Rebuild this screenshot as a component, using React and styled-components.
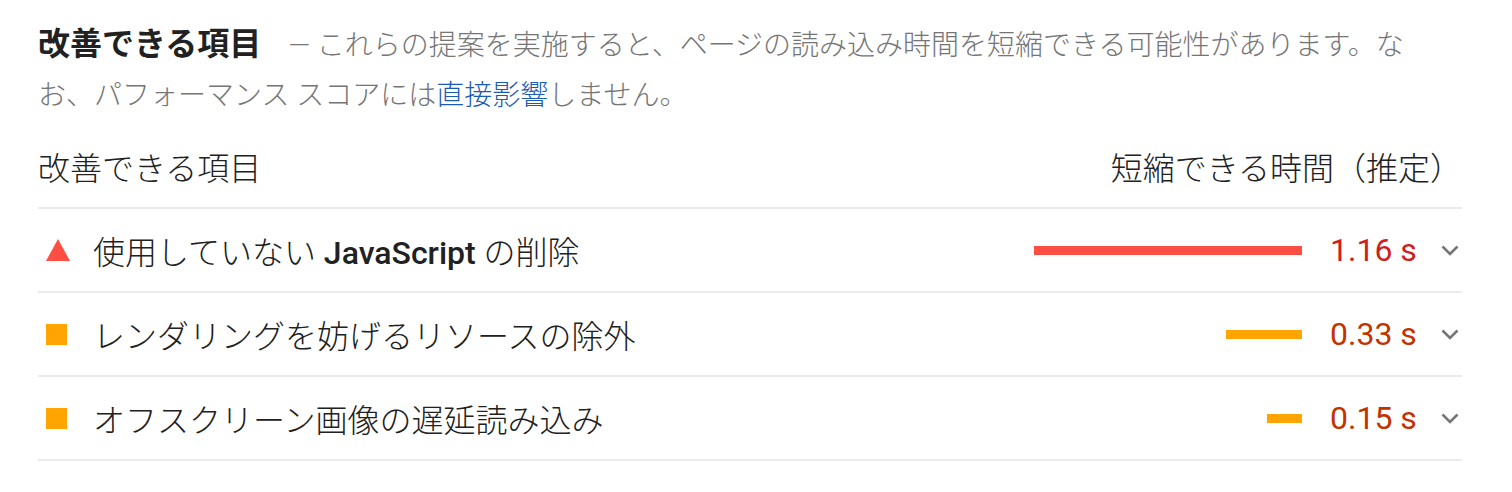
import React from "react";
import styled, { createGlobalStyle } from "styled-components";

const GlobalStyle = createGlobalStyle`
  html, body {
    margin: 0;
    padding: 0;
    background: #ffffff;
  }
  body {
    font-family: Roboto, "Noto Sans CJK JP", sans-serif;
    color: #212121;
  }
`;

const Section = styled.section`
  padding: 19px 50px 0 38px;
`;

const Intro = styled.p`
  margin: 0;
  padding-right: 24px;
  line-height: 50px;
  font-size: 28px;
  color: #757575;
  font-weight: 300;
`;

const GroupTitle = styled.span`
  font-size: 32px;
  font-weight: 700;
  color: #212121;
  margin-right: 27px;
`;

const Description = styled.span`
  color: #757575;
`;

const Link = styled.a`
  color: #1a5bb5;
  text-decoration: none;
`;

const Table = styled.div`
  display: flex;
  flex-direction: column;
`;

const HeaderRow = styled.div`
  display: flex;
  align-items: center;
  justify-content: space-between;
  padding: 28px 0 18px;
  line-height: 40px;
  font-size: 32px;
  font-weight: 300;
  color: #212121;
  border-bottom: 2px solid #ebebeb;
`;

const Row = styled.div`
  display: flex;
  align-items: center;
  height: 82px;
  border-bottom: 2px solid #ebebeb;
`;

const IconSlot = styled.div`
  width: 24px;
  margin-left: 8px;
  margin-right: 23px;
  display: flex;
  align-items: center;
  justify-content: flex-start;
`;

const Triangle = styled.div`
  width: 0;
  height: 0;
  border-left: 12px solid transparent;
  border-right: 12px solid transparent;
  border-bottom: 22px solid #ff4e42;
`;

const Square = styled.div`
  width: 21px;
  height: 21px;
  background: #ffa400;
`;

const Title = styled.div`
  flex: 1;
  font-size: 32px;
  font-weight: 300;
  color: #212121;
  white-space: nowrap;
`;

const Code = styled.span`
  font-weight: 500;
`;

const Spark = styled.div`
  width: 268px;
  display: flex;
  justify-content: flex-end;
`;

const Bar = styled.div`
  height: 9px;
  background: ${(p) => (p.$level === "fail" ? "#ff4e42" : "#ffa400")};
`;

const Value = styled.div`
  width: 108px;
  margin-left: 28px;
  font-family: Roboto, sans-serif;
  font-size: 32px;
  color: ${(p) => (p.$level === "fail" ? "#d01d1d" : "#c33300")};
`;

const Chevron = styled.div`
  width: 24px;
  display: flex;
  justify-content: center;
  align-items: center;
`;

const MAX = 1.16;
const BAR_MAX = 268;

const items = [
  {
    level: "fail",
    title: (
      <>
        使用していない <Code>JavaScript</Code> の削除
      </>
    ),
    value: 1.16,
  },
  { level: "average", title: "レンダリングを妨げるリソースの除外", value: 0.33 },
  { level: "average", title: "オフスクリーン画像の遅延読み込み", value: 0.15 },
];

export default function App() {
  return (
    <>
      <GlobalStyle />
      <Section>
        <Intro>
          <GroupTitle>改善できる項目</GroupTitle>
          <Description>
            — これらの提案を実施すると、ページの読み込み時間を短縮できる可能性があります。なお、パフォーマンス スコアには
          </Description>
          <Link href="#">直接影響</Link>
          <Description>しません。</Description>
        </Intro>
        <Table>
          <HeaderRow>
            <span>改善できる項目</span>
            <span>短縮できる時間（推定）</span>
          </HeaderRow>
          {items.map((it, i) => (
            <Row key={i}>
              <IconSlot>{it.level === "fail" ? <Triangle /> : <Square />}</IconSlot>
              <Title>{it.title}</Title>
              <Spark>
                <Bar $level={it.level} style={{ width: Math.round((it.value / MAX) * BAR_MAX) }} />
              </Spark>
              <Value $level={it.level}>{it.value.toFixed(2)} s</Value>
              <Chevron>
                <svg width="18" height="11" viewBox="0 0 18 11">
                  <polyline points="1.5,1.5 9,9 16.5,1.5" fill="none" stroke="#757575" strokeWidth="2.6" />
                </svg>
              </Chevron>
            </Row>
          ))}
        </Table>
      </Section>
    </>
  );
}
